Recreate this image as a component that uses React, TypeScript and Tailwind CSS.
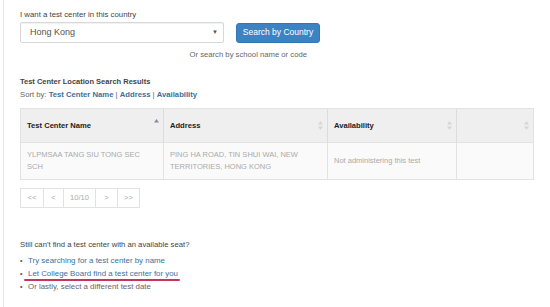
import React from "react";

const SortBoth = () => (
  <svg width="5" height="9" viewBox="0 0 5 9" className="block">
    <path d="M2.5 0 L5 3.5 L0 3.5 Z" fill="#d6d6d6" />
    <path d="M2.5 9 L5 5.5 L0 5.5 Z" fill="#d6d6d6" />
  </svg>
);

const SortUp = () => (
  <svg width="5" height="9" viewBox="0 0 5 9" className="block">
    <path d="M2.5 0 L5 3.5 L0 3.5 Z" fill="#8a8a9a" />
  </svg>
);

export default function App() {
  return (
    <div
      className="w-[550px] h-[307px] bg-white overflow-hidden text-[#333]"
      style={{ fontFamily: '"Liberation Sans", Arial, sans-serif' }}
    >
      <div className="ml-[3px] h-full border-l border-[#e6e6e6] pl-[16px] pt-[10px]">
        <div className="text-[7.8px] leading-[10px] text-[#444]">I want a test center in this country</div>
        <div className="flex items-center mt-[2px]">
          <div className="w-[204px] h-[21px] border border-[#d8d8d8] rounded-[2px] flex items-center justify-between pl-[9px] pr-[5px] shadow-[inset_0_1px_1px_rgba(0,0,0,0.06)]">
            <span className="text-[9px] text-[#555]">Hong Kong</span>
            <span className="text-[6px] text-[#555]">▼</span>
          </div>
          <div className="ml-[12px] w-[84px] h-[20px] rounded-[3px] bg-[#3c83c4] border border-[#3676b2] flex items-center justify-center text-white text-[8.5px]">
            Search by Country
          </div>
        </div>
        <div className="w-[287px] text-right text-[7.7px] leading-[10px] text-[#666] mt-[7px]">
          Or search by school name or code
        </div>

        <div className="mt-[17px] text-[7.5px] leading-[10px] font-bold text-[#444]">Test Center Location Search Results</div>
        <div className="mt-[3px] text-[7.7px] leading-[10px] text-[#666]">
          Sort by: <span className="font-bold text-[#3d6f99]">Test Center Name</span> |{" "}
          <span className="font-bold text-[#3d6f99]">Address</span> |{" "}
          <span className="font-bold text-[#3d6f99]">Availability</span>
        </div>

        <div className="mt-[8px] w-[514px] border border-[#e2e2e2]">
          <div className="grid grid-cols-[143px_164px_129px_1fr] h-[34px] bg-[#efefef] border-b border-[#e2e2e2]">
            <div className="flex items-center justify-between pl-[6px] pr-[4px] border-r border-[#dcdcdc]">
              <span className="text-[7.6px] font-bold text-[#222]">Test Center Name</span>
              <div className="-mt-[4px]"><SortUp /></div>
            </div>
            <div className="flex items-center justify-between pl-[6px] pr-[4px] border-r border-[#dcdcdc]">
              <span className="text-[7.6px] font-bold text-[#222]">Address</span>
              <SortBoth />
            </div>
            <div className="flex items-center justify-between pl-[6px] pr-[4px] border-r border-[#dcdcdc]">
              <span className="text-[7.6px] font-bold text-[#222]">Availability</span>
              <SortBoth />
            </div>
            <div className="flex items-center justify-end pr-[4px]">
              <SortBoth />
            </div>
          </div>
          <div className="grid grid-cols-[143px_164px_129px_1fr] h-[36px] bg-[#fafafa]">
            <div className="flex items-center pl-[6px] border-r border-[#e2e2e2] text-[7.5px] leading-[12px] text-[#aaa]">
              YLPMSAA TANG SIU TONG SEC<br />SCH
            </div>
            <div className="flex items-center pl-[6px] border-r border-[#e2e2e2] text-[7.5px] leading-[12px] text-[#aaa]">
              PING HA ROAD, TIN SHUI WAI, NEW<br />TERRITORIES, HONG KONG
            </div>
            <div className="flex items-center pl-[6px] border-r border-[#e2e2e2] text-[7.5px] text-[#aaa]">
              Not administering this test
            </div>
            <div />
          </div>
        </div>

        <div className="mt-[8px] flex h-[20px] w-fit border border-[#e2e2e2] text-[7.5px] text-[#aaa]">
          <div className="w-[23px] flex items-center justify-center border-r border-[#e2e2e2]">&lt;&lt;</div>
          <div className="w-[20px] flex items-center justify-center border-r border-[#e2e2e2]">&lt;</div>
          <div className="w-[32px] flex items-center justify-center border-r border-[#e2e2e2]">10/10</div>
          <div className="w-[22px] flex items-center justify-center border-r border-[#e2e2e2]">&gt;</div>
          <div className="w-[21px] flex items-center justify-center">&gt;&gt;</div>
        </div>

        <div className="mt-[32px] text-[7.7px] leading-[10px] text-[#444]">
          Still can't find a test center with an available seat?
        </div>
        <ul className="mt-[4px] text-[7.9px] leading-[13px]">
          <li className="flex items-center">
            <span className="w-[8px] text-[#555] text-[7px]">•</span>
            <span className="text-[#3d6f99]">Try searching for a test center by name</span>
          </li>
          <li className="flex items-center">
            <span className="w-[8px] text-[#555] text-[7px]">•</span>
            <span className="relative text-[#3d6f99]">
              Let College Board find a test center for you
              <span className="absolute left-[-4px] right-[-2px] bottom-[-1px] h-[2px] rounded-full bg-[#c8345a]" />
            </span>
          </li>
          <li className="flex items-center">
            <span className="w-[8px] text-[#555] text-[7px]">•</span>
            <span className="text-[#666]">Or lastly, select a different test date</span>
          </li>
        </ul>
      </div>
    </div>
  );
}
